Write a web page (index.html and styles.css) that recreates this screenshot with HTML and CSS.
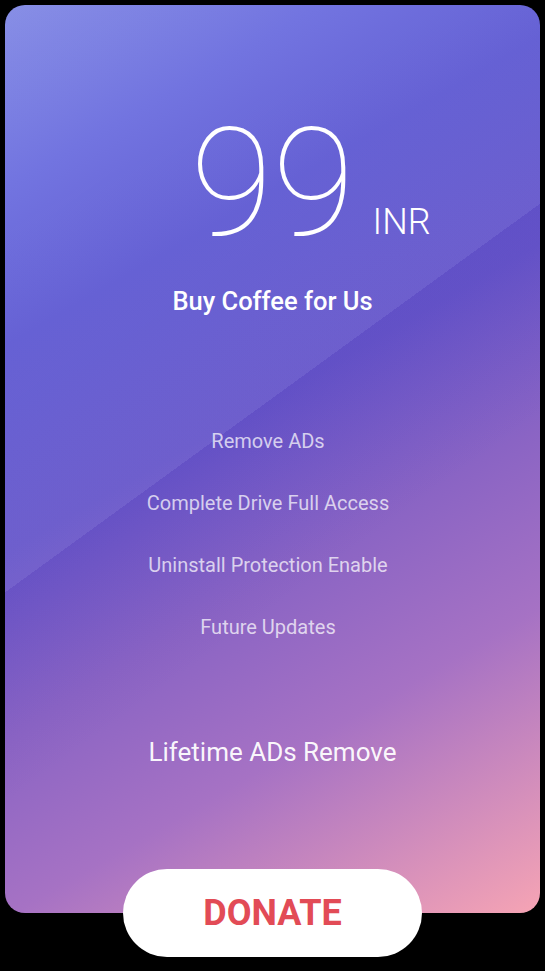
FILE: index.html
```html
<!DOCTYPE html>
<html lang="en">
<head>
<meta charset="utf-8">
<title>Donate</title>
<link rel="stylesheet" href="styles.css">
</head>
<body>
<main class="page">
  <section class="card">
    <div class="price">
      <span class="price-spacer"></span>
      <span class="price-amount">99</span>
      <span class="price-currency">INR</span>
    </div>
    <h1 class="title">Buy Coffee for Us</h1>
    <ul class="features">
      <li>Remove ADs</li>
      <li>Complete Drive Full Access</li>
      <li>Uninstall Protection Enable</li>
      <li>Future Updates</li>
    </ul>
    <p class="lifetime">Lifetime ADs Remove</p>
  </section>
  <button class="donate" type="button">DONATE</button>
</main>
</body>
</html>
```

FILE: styles.css
```css
* { box-sizing: border-box; }

html, body {
  margin: 0;
  padding: 0;
  background: #000;
}

body {
  font-family: Roboto, "Noto Sans", "Liberation Sans", sans-serif;
  width: 545px;
  height: 971px;
  overflow: hidden;
}

.page {
  display: flex;
  flex-direction: column;
  align-items: center;
  padding: 5px 5px 0 5px;
}

.card {
  width: 535px;
  height: 908px;
  border-radius: 20px;
  display: flex;
  flex-direction: column;
  align-items: center;
  padding-top: 104px;
  color: #fff;
  background:
    linear-gradient(144deg, rgba(255,255,255,0.06) 0%, rgba(255,255,255,0.05) 45.3%, rgba(60,25,160,0.09) 45.3%, rgba(60,25,160,0) 62%),
    linear-gradient(150deg, #8088e4 0%, #6a6cde 15%, #5d58d2 28%, #6656ca 45%, #8a64c4 60%, #a672c4 75%, #d08cbc 88%, #f6a4b4 100%);
}

.price {
  width: 100%;
  display: grid;
  grid-template-columns: 1fr auto 1fr;
  align-items: baseline;
}

.price-amount {
  font-family: "Roboto Thin", Roboto, sans-serif;
  font-size: 150px;
  font-weight: 100;
  line-height: 1;
}

.price-currency {
  font-family: "Roboto Light", Roboto, sans-serif;
  font-size: 36px;
  font-weight: 300;
  line-height: 1;
  margin-left: 18px;
  justify-self: start;
  position: relative;
  top: -1px;
}

.title {
  margin: 27px 0 0 0;
  font-size: 25.5px;
  font-weight: 500;
  line-height: 30px;
}

.features {
  list-style: none;
  margin: 113px 9px 0 0;
  padding: 0;
  display: flex;
  flex-direction: column;
  align-items: center;
  gap: 38px;
}

.features li {
  font-size: 20px;
  line-height: 24px;
  color: rgba(255, 255, 255, 0.72);
}

.lifetime {
  margin: 98px 0 0 0;
  font-size: 26px;
  line-height: 30px;
  color: rgba(255, 255, 255, 0.96);
}

.donate {
  margin-top: -44px;
  width: 299px;
  height: 88px;
  border: none;
  border-radius: 44px;
  background: #fff;
  color: #e24b56;
  font-family: Roboto, "Noto Sans", sans-serif;
  font-weight: 700;
  font-size: 36px;
  padding: 0;
}
```
